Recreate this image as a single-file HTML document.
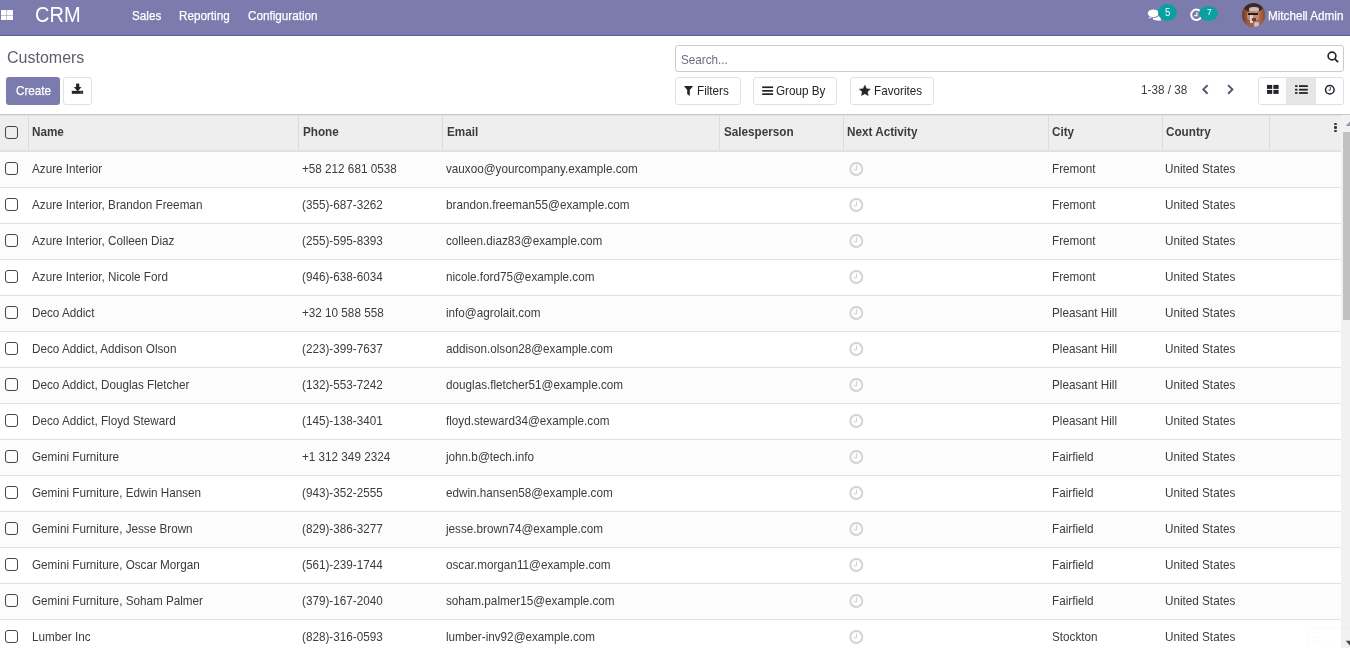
<!DOCTYPE html>
<html><head><meta charset="utf-8">
<style>
*{box-sizing:border-box;margin:0;padding:0}
html,body{width:1350px;height:648px;overflow:hidden;background:#fff;font-family:"Liberation Sans",sans-serif;color:#3c3c3c;font-size:13px}
.a{position:absolute}
.t{position:absolute;white-space:nowrap;line-height:1;transform-origin:0 0}
.btn{position:absolute;border:1px solid #dee2e6;border-radius:3px;background:#fff}
.cb{position:absolute;left:5px;width:13px;height:13px;border:1.6px solid #47434f;border-radius:3px;background:transparent}
.clk{position:absolute;left:849px;width:14px;height:14px;border:2px solid #d4d4d4;border-radius:50%}
.clk:before{content:"";position:absolute;left:4px;top:2px;width:2px;height:4px;background:#d4d4d4}
.clk:after{content:"";position:absolute;left:3px;top:5px;width:3px;height:2px;background:#d4d4d4}
</style></head><body>
<div class="a" style="left:0px;top:0px;width:1350px;height:35px;background:#7c7bad"></div>
<div class="a" style="left:0px;top:35px;width:1350px;height:1px;background:#5f5e97"></div>
<div class="a" style="left:1px;top:10px;width:12px;height:10px;background:#fff"></div>
<div class="a" style="left:6px;top:10px;width:1px;height:10px;background:rgba(124,123,173,0.45)"></div>
<div class="a" style="left:1px;top:15px;width:12px;height:1px;background:rgba(124,123,173,0.45)"></div>
<div class="t" style="left:35px;top:4px;font-size:22px;color:#fff;transform:scaleX(0.91)">CRM</div>
<div class="t" style="left:132px;top:9px;font-size:13px;color:#fff;transform:scaleX(0.9);-webkit-text-stroke:0.25px #fff">Sales</div>
<div class="t" style="left:179px;top:9px;font-size:13px;color:#fff;transform:scaleX(0.9);-webkit-text-stroke:0.25px #fff">Reporting</div>
<div class="t" style="left:248px;top:9px;font-size:13px;color:#fff;transform:scaleX(0.9);-webkit-text-stroke:0.25px #fff">Configuration</div>
<div class="t" style="left:1268px;top:9px;font-size:13px;color:#fff;transform:scaleX(0.9);-webkit-text-stroke:0.25px #fff">Mitchell Admin</div>
<svg class="a" style="left:1144px;top:4px" width="20" height="20" viewBox="1144 4 20 20">
<ellipse cx="1157.2" cy="17.6" rx="4.6" ry="2.9" fill="#fff"/>
<path d="M1159.5 19l2 1.8-3.5-.6z" fill="#fff"/>
<ellipse cx="1153.3" cy="13.4" rx="6.3" ry="4.6" fill="#7c7bad"/>
<ellipse cx="1153.3" cy="13.3" rx="5.5" ry="3.9" fill="#fff"/>
<path d="M1150 16.2l-1.4 2.6 3.6-1.7z" fill="#fff"/>
</svg>
<div class="a" style="left:1158px;top:4px;width:19px;height:17px;background:#0aa0a0;border-radius:50%"></div>
<div class="t" style="left:1165px;top:8.2px;font-size:10px;color:#fff;transform:scaleX(0.95)">5</div>
<svg class="a" style="left:1189px;top:8px" width="14" height="14" viewBox="0 0 14 14">
<circle cx="7.4" cy="6.8" r="5.2" fill="none" stroke="#fff" stroke-width="2"/>
<path d="M7.9 4.3v3.3H5.3" fill="none" stroke="#fff" stroke-width="1.2"/>
</svg>
<div class="a" style="left:1199px;top:6px;width:19px;height:15px;background:#0aa0a0;border-radius:50%"></div>
<div class="t" style="left:1206.6px;top:8.2px;font-size:9px;color:#fff;transform:scaleX(0.95)">7</div>
<div class="a" style="left:1242px;top:3px;width:23px;height:24px;border-radius:50%;overflow:hidden;background:#8a5236">
<div class="a" style="left:0;top:0;width:23px;height:24px;filter:blur(0.6px)">
<div class="a" style="left:0;top:0;width:23px;height:24px;background:linear-gradient(90deg,#6a3a2a 0,#9a5c3c 25%,#b06c48 75%,#8a4c30 100%)"></div>
<div class="a" style="left:2px;top:0;width:19px;height:9px;border-radius:50%;background:#3b2a22"></div>
<div class="a" style="left:7px;top:4px;width:10px;height:5px;border-radius:40%;background:#c8b8c0"></div>
<div class="a" style="left:5px;top:8px;width:12px;height:10px;border-radius:40%;background:#c08870"></div>
<div class="a" style="left:6px;top:10px;width:10px;height:2px;background:#2a1a15"></div>
<div class="a" style="left:8px;top:12px;width:3px;height:8px;background:#d8d0d8"></div>
<div class="a" style="left:12px;top:19px;width:5px;height:5px;background:#c0c0d0;border-radius:30%"></div>
<div class="a" style="left:10px;top:15px;width:4px;height:3px;background:#7a3a30"></div>
</div></div>
<div class="t" style="left:6.5px;top:49px;font-size:16.5px;color:#605c6c;transform:scaleX(0.97)">Customers</div>
<div class="a" style="left:6px;top:77px;width:54px;height:28px;background:#7c7bad;border-radius:3px"></div>
<div class="t" style="left:16px;top:84px;font-size:13px;color:#fff;transform:scaleX(0.9);-webkit-text-stroke:0.25px #fff">Create</div>
<div class="btn" style="left:63px;top:77px;width:29px;height:28px"></div>
<svg class="a" style="left:63px;top:77px" width="29" height="28" viewBox="63 77 29 28">
<rect x="76.1" y="83.6" width="3.2" height="3.8" fill="#212529"/>
<path d="M73.9 87h7.6l-3.8 4.4z" fill="#212529"/>
<rect x="71.8" y="90.8" width="11.3" height="3" fill="#212529"/>
<rect x="80.5" y="91.8" width="1.2" height="1" fill="#7aa0d0"/>
</svg>
<div class="a" style="left:675px;top:45px;width:669px;height:27px;border:1px solid #ccc;border-radius:3px"></div>
<div class="t" style="left:680.7px;top:53px;font-size:13px;color:#6e6a80;transform:scaleX(0.9)">Search...</div>
<svg class="a" style="left:1320px;top:45px" width="24" height="24" viewBox="1320 45 24 24">
<circle cx="1332" cy="56" r="3.9" fill="none" stroke="#212529" stroke-width="1.6"/>
<path d="M1334.8 58.8l3.3 3.3" stroke="#212529" stroke-width="1.8"/>
</svg>
<div class="btn" style="left:675px;top:77px;width:66px;height:28px"></div>
<div class="t" style="left:697px;top:84px;font-size:13px;color:#212529;transform:scaleX(0.9)">Filters</div>
<div class="btn" style="left:753px;top:77px;width:84px;height:28px"></div>
<div class="t" style="left:776px;top:84px;font-size:13px;color:#212529;transform:scaleX(0.9)">Group By</div>
<div class="btn" style="left:850px;top:77px;width:84px;height:28px"></div>
<div class="t" style="left:874px;top:84px;font-size:13px;color:#212529;transform:scaleX(0.9)">Favorites</div>
<svg class="a" style="left:680px;top:80px" width="200" height="20" viewBox="680 80 200 20">
<path d="M684 86h9.1l-3.3 3.9v6l-2.6-1.9v-4.1z" fill="#212529"/>
<rect x="762.2" y="86.4" width="10.9" height="1.7" fill="#212529"/>
<rect x="762.2" y="90" width="10.9" height="1.7" fill="#212529"/>
<rect x="762.2" y="93.3" width="10.9" height="1.7" fill="#212529"/>
<path d="M864.85 85.20 L866.47 88.68 L870.27 89.14 L867.47 91.75 L868.20 95.51 L864.85 93.65 L861.50 95.51 L862.23 91.75 L859.43 89.14 L863.23 88.68z" fill="#212529" stroke="#212529" stroke-width="0.5" stroke-linejoin="round"/>
</svg>
<div class="t" style="left:1141.4px;top:83px;font-size:13px;transform:scaleX(0.9)">1-38 / 38</div>
<svg class="a" style="left:1198px;top:82px" width="40" height="16" viewBox="1198 82 40 16">
<path d="M1207.6 85.1l-4.3 4.3 4.3 4.3" fill="none" stroke="#5e5274" stroke-width="2"/>
<path d="M1228.1 85.1l4.3 4.3-4.3 4.3" fill="none" stroke="#5e5274" stroke-width="2"/>
</svg>
<div class="btn" style="left:1258px;top:77px;width:86px;height:28px"></div>
<div class="a" style="left:1286px;top:78px;width:30px;height:26px;background:#e6e6e6"></div>
<svg class="a" style="left:1262px;top:80px" width="80" height="20" viewBox="1262 80 80 20">
<rect x="1267" y="84.9" width="5.2" height="4" fill="#212529"/>
<rect x="1273.4" y="84.9" width="5.2" height="4" fill="#212529"/>
<rect x="1267" y="89.9" width="5.2" height="4" fill="#212529"/>
<rect x="1273.4" y="89.9" width="5.2" height="4" fill="#212529"/>
<rect x="1295.1" y="85.2" width="2.4" height="1.8" fill="#212529"/>
<rect x="1295.1" y="88.8" width="2.4" height="1.8" fill="#212529"/>
<rect x="1295.1" y="92.1" width="2.4" height="1.8" fill="#212529"/>
<rect x="1299" y="85.2" width="8.8" height="1.8" fill="#212529"/>
<rect x="1299" y="88.8" width="8.8" height="1.8" fill="#212529"/>
<rect x="1299" y="92.1" width="8.8" height="1.8" fill="#212529"/>
<circle cx="1329.8" cy="89.7" r="4.3" fill="none" stroke="#212529" stroke-width="1.5"/>
<path d="M1330.3 87v3.2h-1.8" fill="none" stroke="#4a4070" stroke-width="1"/>
</svg>
<div class="a" style="left:0px;top:114px;width:1350px;height:1px;background:#c9c9c9"></div>
<div class="a" style="left:0px;top:115px;width:1341px;height:1px;background:#dde0e3"></div>
<div class="a" style="left:0px;top:116px;width:1341px;height:34px;background:#eeeeee"></div>
<div class="a" style="left:0px;top:150px;width:1341px;height:2px;background:#dee2e6"></div>
<div class="cb" style="top:126px"></div>
<div class="a" style="left:28px;top:116px;width:1px;height:34px;background:#dcdcdc"></div>
<div class="a" style="left:298px;top:116px;width:1px;height:34px;background:#dcdcdc"></div>
<div class="a" style="left:442px;top:116px;width:1px;height:34px;background:#dcdcdc"></div>
<div class="a" style="left:719px;top:116px;width:1px;height:34px;background:#dcdcdc"></div>
<div class="a" style="left:843px;top:116px;width:1px;height:34px;background:#dcdcdc"></div>
<div class="a" style="left:1048px;top:116px;width:1px;height:34px;background:#dcdcdc"></div>
<div class="a" style="left:1162px;top:116px;width:1px;height:34px;background:#dcdcdc"></div>
<div class="a" style="left:1269px;top:116px;width:1px;height:34px;background:#dcdcdc"></div>
<div class="t" style="left:32px;top:125px;font-size:13px;font-weight:bold;transform:scaleX(0.9)">Name</div>
<div class="t" style="left:302.6px;top:125px;font-size:13px;font-weight:bold;transform:scaleX(0.9)">Phone</div>
<div class="t" style="left:446.6px;top:125px;font-size:13px;font-weight:bold;transform:scaleX(0.9)">Email</div>
<div class="t" style="left:723.6px;top:125px;font-size:13px;font-weight:bold;transform:scaleX(0.9)">Salesperson</div>
<div class="t" style="left:847.4px;top:125px;font-size:13px;font-weight:bold;transform:scaleX(0.9)">Next Activity</div>
<div class="t" style="left:1051.6px;top:125px;font-size:13px;font-weight:bold;transform:scaleX(0.9)">City</div>
<div class="t" style="left:1165.8px;top:125px;font-size:13px;font-weight:bold;transform:scaleX(0.9)">Country</div>
<div class="a" style="left:1334px;top:122.6px;width:3px;height:2.6px;background:#3a3348;border-radius:1px"></div>
<div class="a" style="left:1334px;top:126.2px;width:3px;height:2.6px;background:#3a3348;border-radius:1px"></div>
<div class="a" style="left:1334px;top:129.8px;width:3px;height:2.6px;background:#3a3348;border-radius:1px"></div>
<div class="a" style="left:0px;top:152px;width:1341px;height:35px;background:#fcfcfc"></div>
<div class="a" style="left:0px;top:187px;width:1341px;height:1px;background:#dee2e6"></div>
<div class="cb" style="top:162px"></div>
<div class="t" style="left:31.6px;top:162px;font-size:13px;transform:scaleX(0.9)">Azure Interior</div>
<div class="t" style="left:302px;top:162px;font-size:13px;transform:scaleX(0.9)">+58 212 681 0538</div>
<div class="t" style="left:446px;top:162px;font-size:13px;transform:scaleX(0.9)">vauxoo@yourcompany.example.com</div>
<svg class="a" style="left:846px;top:159px" width="20" height="20" viewBox="0 0 20 20"><circle cx="10.3" cy="10" r="6" fill="none" stroke="#d3d3d3" stroke-width="1.9"/><path d="M10.5 6.3v4.3H8.1" fill="none" stroke="#d3d3d3" stroke-width="1.1"/></svg>
<div class="t" style="left:1052px;top:162px;font-size:13px;transform:scaleX(0.9)">Fremont</div>
<div class="t" style="left:1165.2px;top:162px;font-size:13px;transform:scaleX(0.9)">United States</div>
<div class="a" style="left:0px;top:223px;width:1341px;height:1px;background:#dee2e6"></div>
<div class="cb" style="top:198px"></div>
<div class="t" style="left:31.6px;top:198px;font-size:13px;transform:scaleX(0.9)">Azure Interior, Brandon Freeman</div>
<div class="t" style="left:302px;top:198px;font-size:13px;transform:scaleX(0.9)">(355)-687-3262</div>
<div class="t" style="left:446px;top:198px;font-size:13px;transform:scaleX(0.9)">brandon.freeman55@example.com</div>
<svg class="a" style="left:846px;top:195px" width="20" height="20" viewBox="0 0 20 20"><circle cx="10.3" cy="10" r="6" fill="none" stroke="#d3d3d3" stroke-width="1.9"/><path d="M10.5 6.3v4.3H8.1" fill="none" stroke="#d3d3d3" stroke-width="1.1"/></svg>
<div class="t" style="left:1052px;top:198px;font-size:13px;transform:scaleX(0.9)">Fremont</div>
<div class="t" style="left:1165.2px;top:198px;font-size:13px;transform:scaleX(0.9)">United States</div>
<div class="a" style="left:0px;top:224px;width:1341px;height:35px;background:#fcfcfc"></div>
<div class="a" style="left:0px;top:259px;width:1341px;height:1px;background:#dee2e6"></div>
<div class="cb" style="top:234px"></div>
<div class="t" style="left:31.6px;top:234px;font-size:13px;transform:scaleX(0.9)">Azure Interior, Colleen Diaz</div>
<div class="t" style="left:302px;top:234px;font-size:13px;transform:scaleX(0.9)">(255)-595-8393</div>
<div class="t" style="left:446px;top:234px;font-size:13px;transform:scaleX(0.9)">colleen.diaz83@example.com</div>
<svg class="a" style="left:846px;top:231px" width="20" height="20" viewBox="0 0 20 20"><circle cx="10.3" cy="10" r="6" fill="none" stroke="#d3d3d3" stroke-width="1.9"/><path d="M10.5 6.3v4.3H8.1" fill="none" stroke="#d3d3d3" stroke-width="1.1"/></svg>
<div class="t" style="left:1052px;top:234px;font-size:13px;transform:scaleX(0.9)">Fremont</div>
<div class="t" style="left:1165.2px;top:234px;font-size:13px;transform:scaleX(0.9)">United States</div>
<div class="a" style="left:0px;top:295px;width:1341px;height:1px;background:#dee2e6"></div>
<div class="cb" style="top:270px"></div>
<div class="t" style="left:31.6px;top:270px;font-size:13px;transform:scaleX(0.9)">Azure Interior, Nicole Ford</div>
<div class="t" style="left:302px;top:270px;font-size:13px;transform:scaleX(0.9)">(946)-638-6034</div>
<div class="t" style="left:446px;top:270px;font-size:13px;transform:scaleX(0.9)">nicole.ford75@example.com</div>
<svg class="a" style="left:846px;top:267px" width="20" height="20" viewBox="0 0 20 20"><circle cx="10.3" cy="10" r="6" fill="none" stroke="#d3d3d3" stroke-width="1.9"/><path d="M10.5 6.3v4.3H8.1" fill="none" stroke="#d3d3d3" stroke-width="1.1"/></svg>
<div class="t" style="left:1052px;top:270px;font-size:13px;transform:scaleX(0.9)">Fremont</div>
<div class="t" style="left:1165.2px;top:270px;font-size:13px;transform:scaleX(0.9)">United States</div>
<div class="a" style="left:0px;top:296px;width:1341px;height:35px;background:#fcfcfc"></div>
<div class="a" style="left:0px;top:331px;width:1341px;height:1px;background:#dee2e6"></div>
<div class="cb" style="top:306px"></div>
<div class="t" style="left:31.6px;top:306px;font-size:13px;transform:scaleX(0.9)">Deco Addict</div>
<div class="t" style="left:302px;top:306px;font-size:13px;transform:scaleX(0.9)">+32 10 588 558</div>
<div class="t" style="left:446px;top:306px;font-size:13px;transform:scaleX(0.9)">info@agrolait.com</div>
<svg class="a" style="left:846px;top:303px" width="20" height="20" viewBox="0 0 20 20"><circle cx="10.3" cy="10" r="6" fill="none" stroke="#d3d3d3" stroke-width="1.9"/><path d="M10.5 6.3v4.3H8.1" fill="none" stroke="#d3d3d3" stroke-width="1.1"/></svg>
<div class="t" style="left:1052px;top:306px;font-size:13px;transform:scaleX(0.9)">Pleasant Hill</div>
<div class="t" style="left:1165.2px;top:306px;font-size:13px;transform:scaleX(0.9)">United States</div>
<div class="a" style="left:0px;top:367px;width:1341px;height:1px;background:#dee2e6"></div>
<div class="cb" style="top:342px"></div>
<div class="t" style="left:31.6px;top:342px;font-size:13px;transform:scaleX(0.9)">Deco Addict, Addison Olson</div>
<div class="t" style="left:302px;top:342px;font-size:13px;transform:scaleX(0.9)">(223)-399-7637</div>
<div class="t" style="left:446px;top:342px;font-size:13px;transform:scaleX(0.9)">addison.olson28@example.com</div>
<svg class="a" style="left:846px;top:339px" width="20" height="20" viewBox="0 0 20 20"><circle cx="10.3" cy="10" r="6" fill="none" stroke="#d3d3d3" stroke-width="1.9"/><path d="M10.5 6.3v4.3H8.1" fill="none" stroke="#d3d3d3" stroke-width="1.1"/></svg>
<div class="t" style="left:1052px;top:342px;font-size:13px;transform:scaleX(0.9)">Pleasant Hill</div>
<div class="t" style="left:1165.2px;top:342px;font-size:13px;transform:scaleX(0.9)">United States</div>
<div class="a" style="left:0px;top:368px;width:1341px;height:35px;background:#fcfcfc"></div>
<div class="a" style="left:0px;top:403px;width:1341px;height:1px;background:#dee2e6"></div>
<div class="cb" style="top:378px"></div>
<div class="t" style="left:31.6px;top:378px;font-size:13px;transform:scaleX(0.9)">Deco Addict, Douglas Fletcher</div>
<div class="t" style="left:302px;top:378px;font-size:13px;transform:scaleX(0.9)">(132)-553-7242</div>
<div class="t" style="left:446px;top:378px;font-size:13px;transform:scaleX(0.9)">douglas.fletcher51@example.com</div>
<svg class="a" style="left:846px;top:375px" width="20" height="20" viewBox="0 0 20 20"><circle cx="10.3" cy="10" r="6" fill="none" stroke="#d3d3d3" stroke-width="1.9"/><path d="M10.5 6.3v4.3H8.1" fill="none" stroke="#d3d3d3" stroke-width="1.1"/></svg>
<div class="t" style="left:1052px;top:378px;font-size:13px;transform:scaleX(0.9)">Pleasant Hill</div>
<div class="t" style="left:1165.2px;top:378px;font-size:13px;transform:scaleX(0.9)">United States</div>
<div class="a" style="left:0px;top:439px;width:1341px;height:1px;background:#dee2e6"></div>
<div class="cb" style="top:414px"></div>
<div class="t" style="left:31.6px;top:414px;font-size:13px;transform:scaleX(0.9)">Deco Addict, Floyd Steward</div>
<div class="t" style="left:302px;top:414px;font-size:13px;transform:scaleX(0.9)">(145)-138-3401</div>
<div class="t" style="left:446px;top:414px;font-size:13px;transform:scaleX(0.9)">floyd.steward34@example.com</div>
<svg class="a" style="left:846px;top:411px" width="20" height="20" viewBox="0 0 20 20"><circle cx="10.3" cy="10" r="6" fill="none" stroke="#d3d3d3" stroke-width="1.9"/><path d="M10.5 6.3v4.3H8.1" fill="none" stroke="#d3d3d3" stroke-width="1.1"/></svg>
<div class="t" style="left:1052px;top:414px;font-size:13px;transform:scaleX(0.9)">Pleasant Hill</div>
<div class="t" style="left:1165.2px;top:414px;font-size:13px;transform:scaleX(0.9)">United States</div>
<div class="a" style="left:0px;top:440px;width:1341px;height:35px;background:#fcfcfc"></div>
<div class="a" style="left:0px;top:475px;width:1341px;height:1px;background:#dee2e6"></div>
<div class="cb" style="top:450px"></div>
<div class="t" style="left:31.6px;top:450px;font-size:13px;transform:scaleX(0.9)">Gemini Furniture</div>
<div class="t" style="left:302px;top:450px;font-size:13px;transform:scaleX(0.9)">+1 312 349 2324</div>
<div class="t" style="left:446px;top:450px;font-size:13px;transform:scaleX(0.9)">john.b@tech.info</div>
<svg class="a" style="left:846px;top:447px" width="20" height="20" viewBox="0 0 20 20"><circle cx="10.3" cy="10" r="6" fill="none" stroke="#d3d3d3" stroke-width="1.9"/><path d="M10.5 6.3v4.3H8.1" fill="none" stroke="#d3d3d3" stroke-width="1.1"/></svg>
<div class="t" style="left:1052px;top:450px;font-size:13px;transform:scaleX(0.9)">Fairfield</div>
<div class="t" style="left:1165.2px;top:450px;font-size:13px;transform:scaleX(0.9)">United States</div>
<div class="a" style="left:0px;top:511px;width:1341px;height:1px;background:#dee2e6"></div>
<div class="cb" style="top:486px"></div>
<div class="t" style="left:31.6px;top:486px;font-size:13px;transform:scaleX(0.9)">Gemini Furniture, Edwin Hansen</div>
<div class="t" style="left:302px;top:486px;font-size:13px;transform:scaleX(0.9)">(943)-352-2555</div>
<div class="t" style="left:446px;top:486px;font-size:13px;transform:scaleX(0.9)">edwin.hansen58@example.com</div>
<svg class="a" style="left:846px;top:483px" width="20" height="20" viewBox="0 0 20 20"><circle cx="10.3" cy="10" r="6" fill="none" stroke="#d3d3d3" stroke-width="1.9"/><path d="M10.5 6.3v4.3H8.1" fill="none" stroke="#d3d3d3" stroke-width="1.1"/></svg>
<div class="t" style="left:1052px;top:486px;font-size:13px;transform:scaleX(0.9)">Fairfield</div>
<div class="t" style="left:1165.2px;top:486px;font-size:13px;transform:scaleX(0.9)">United States</div>
<div class="a" style="left:0px;top:512px;width:1341px;height:35px;background:#fcfcfc"></div>
<div class="a" style="left:0px;top:547px;width:1341px;height:1px;background:#dee2e6"></div>
<div class="cb" style="top:522px"></div>
<div class="t" style="left:31.6px;top:522px;font-size:13px;transform:scaleX(0.9)">Gemini Furniture, Jesse Brown</div>
<div class="t" style="left:302px;top:522px;font-size:13px;transform:scaleX(0.9)">(829)-386-3277</div>
<div class="t" style="left:446px;top:522px;font-size:13px;transform:scaleX(0.9)">jesse.brown74@example.com</div>
<svg class="a" style="left:846px;top:519px" width="20" height="20" viewBox="0 0 20 20"><circle cx="10.3" cy="10" r="6" fill="none" stroke="#d3d3d3" stroke-width="1.9"/><path d="M10.5 6.3v4.3H8.1" fill="none" stroke="#d3d3d3" stroke-width="1.1"/></svg>
<div class="t" style="left:1052px;top:522px;font-size:13px;transform:scaleX(0.9)">Fairfield</div>
<div class="t" style="left:1165.2px;top:522px;font-size:13px;transform:scaleX(0.9)">United States</div>
<div class="a" style="left:0px;top:583px;width:1341px;height:1px;background:#dee2e6"></div>
<div class="cb" style="top:558px"></div>
<div class="t" style="left:31.6px;top:558px;font-size:13px;transform:scaleX(0.9)">Gemini Furniture, Oscar Morgan</div>
<div class="t" style="left:302px;top:558px;font-size:13px;transform:scaleX(0.9)">(561)-239-1744</div>
<div class="t" style="left:446px;top:558px;font-size:13px;transform:scaleX(0.9)">oscar.morgan11@example.com</div>
<svg class="a" style="left:846px;top:555px" width="20" height="20" viewBox="0 0 20 20"><circle cx="10.3" cy="10" r="6" fill="none" stroke="#d3d3d3" stroke-width="1.9"/><path d="M10.5 6.3v4.3H8.1" fill="none" stroke="#d3d3d3" stroke-width="1.1"/></svg>
<div class="t" style="left:1052px;top:558px;font-size:13px;transform:scaleX(0.9)">Fairfield</div>
<div class="t" style="left:1165.2px;top:558px;font-size:13px;transform:scaleX(0.9)">United States</div>
<div class="a" style="left:0px;top:584px;width:1341px;height:35px;background:#fcfcfc"></div>
<div class="a" style="left:0px;top:619px;width:1341px;height:1px;background:#dee2e6"></div>
<div class="cb" style="top:594px"></div>
<div class="t" style="left:31.6px;top:594px;font-size:13px;transform:scaleX(0.9)">Gemini Furniture, Soham Palmer</div>
<div class="t" style="left:302px;top:594px;font-size:13px;transform:scaleX(0.9)">(379)-167-2040</div>
<div class="t" style="left:446px;top:594px;font-size:13px;transform:scaleX(0.9)">soham.palmer15@example.com</div>
<svg class="a" style="left:846px;top:591px" width="20" height="20" viewBox="0 0 20 20"><circle cx="10.3" cy="10" r="6" fill="none" stroke="#d3d3d3" stroke-width="1.9"/><path d="M10.5 6.3v4.3H8.1" fill="none" stroke="#d3d3d3" stroke-width="1.1"/></svg>
<div class="t" style="left:1052px;top:594px;font-size:13px;transform:scaleX(0.9)">Fairfield</div>
<div class="t" style="left:1165.2px;top:594px;font-size:13px;transform:scaleX(0.9)">United States</div>
<div class="a" style="left:0px;top:655px;width:1341px;height:1px;background:#dee2e6"></div>
<div class="cb" style="top:630px"></div>
<div class="t" style="left:31.6px;top:630px;font-size:13px;transform:scaleX(0.9)">Lumber Inc</div>
<div class="t" style="left:302px;top:630px;font-size:13px;transform:scaleX(0.9)">(828)-316-0593</div>
<div class="t" style="left:446px;top:630px;font-size:13px;transform:scaleX(0.9)">lumber-inv92@example.com</div>
<svg class="a" style="left:846px;top:627px" width="20" height="20" viewBox="0 0 20 20"><circle cx="10.3" cy="10" r="6" fill="none" stroke="#d3d3d3" stroke-width="1.9"/><path d="M10.5 6.3v4.3H8.1" fill="none" stroke="#d3d3d3" stroke-width="1.1"/></svg>
<div class="t" style="left:1052px;top:630px;font-size:13px;transform:scaleX(0.9)">Stockton</div>
<div class="t" style="left:1165.2px;top:630px;font-size:13px;transform:scaleX(0.9)">United States</div>
<div class="a" style="left:1341px;top:115px;width:9px;height:533px;background:#f1f1f1"></div>
<svg class="a" style="left:1341px;top:115px" width="9" height="533" viewBox="1341 115 9 533">
<path d="M1345.7 126h8.4l-4.2-4.4z" fill="#9d94b4"/>
<rect x="1343" y="132" width="7" height="188" fill="#c1c1c1"/>
<path d="M1345.7 640.7h8.4l-4.2 4.8z" fill="#4a4650"/>
</svg>
<div class="a" style="left:1307px;top:628px;width:60px;height:30px;border:1px solid rgba(0,0,0,0.025)"></div>
<div class="t" style="left:1314px;top:636.3px;font-size:12.5px;color:rgba(0,0,0,0.03)">Record</div>
</body></html>
